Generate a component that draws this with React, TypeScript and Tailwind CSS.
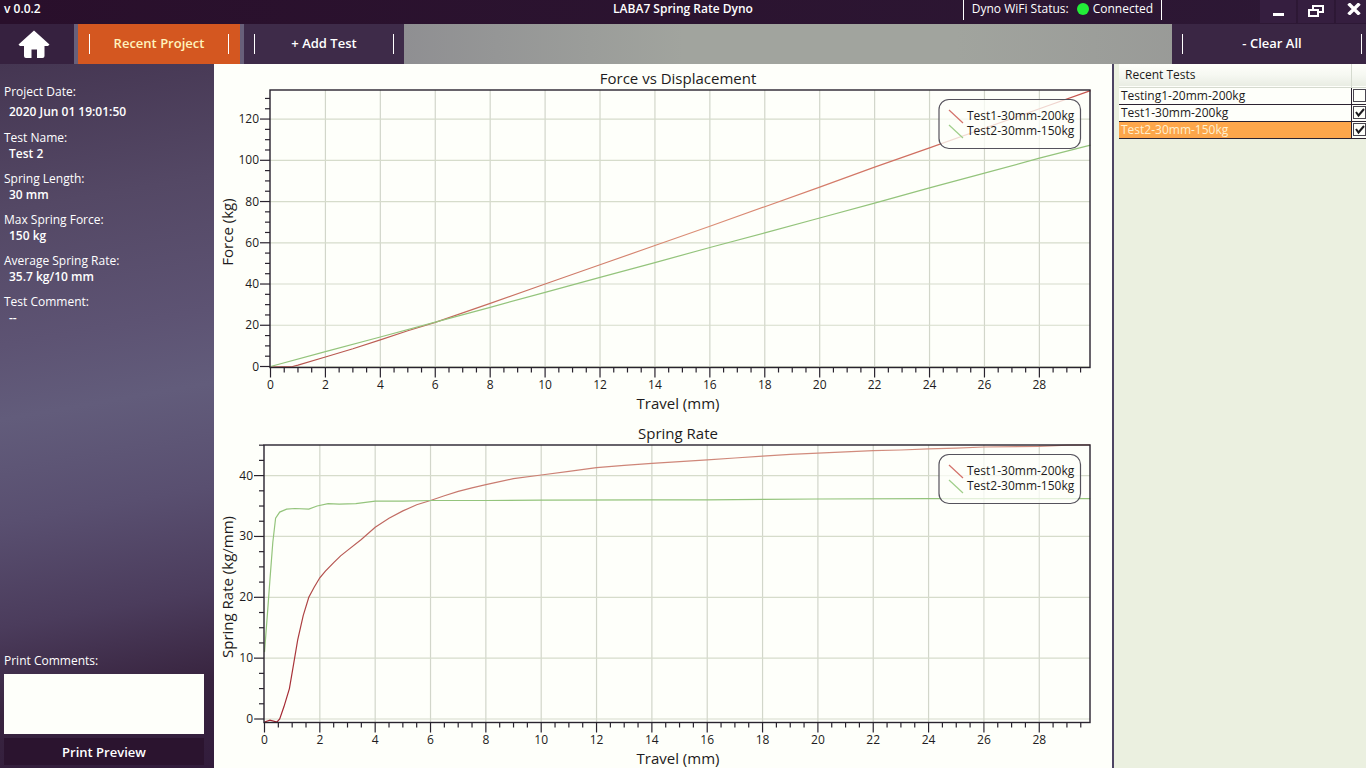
import { useState } from "react";

type Point = [number, number];

interface Axis {
  label: string;
  major: number[];
  minor: number[];
  toPixel: (v: number) => number;
}

interface ChartProps {
  title: string;
  viewHeight: number;
  plot: { left: number; top: number; right: number; bottom: number };
  x: Axis;
  y: Axis;
  red: Point[];
  green: Point[];
  tests: string[];
  strong?: boolean;
}

const range = (from: number, to: number, step: number) => {
  const out: number[] = [];
  for (let v = from; v <= to + 1e-9; v += step) out.push(v);
  return out;
};

const VIEW_WIDTH = 898;

function Chart({ title, viewHeight, plot, x, y, red, green, tests, strong }: ChartProps) {
  const { left, top, right, bottom } = plot;
  const middle = 464;
  const path = (pts: Point[]) =>
    pts.map(([a, b]) => `${x.toPixel(a).toFixed(1)},${y.toPixel(b).toFixed(1)}`).join(" ");
  const id = title.replace(/\s/g, "-");
  return (
    <svg
      viewBox={`0 0 ${VIEW_WIDTH} ${viewHeight}`}
      role="img"
      aria-label={title}
      className="block w-full font-['Open_Sans','Noto_Sans',sans-serif] text-[#1d1b20]"
    >
      <defs>
        <linearGradient id={`${id}-red`} gradientUnits="userSpaceOnUse" x1={left} y1={bottom} x2={left} y2={top}>
          <stop offset="0" stopColor={strong ? "#a32430" : "#b5524c"} />
          <stop offset="0.5" stopColor={strong ? "#b04a48" : "#dc9078"} />
          <stop offset="1" stopColor={strong ? "#d38f80" : "#c4524c"} />
        </linearGradient>
      </defs>
      <text x={middle} y={20} textAnchor="middle" fontSize="15" fill="currentColor">
        {title}
      </text>

      {x.major.filter((v) => v > 0).map((v) => (
        <line key={v} x1={x.toPixel(v)} x2={x.toPixel(v)} y1={top} y2={bottom} stroke="#d2d6ca" strokeWidth="1.2" />
      ))}
      {y.major.map((v) => (
        <line key={v} x1={left} x2={right} y1={y.toPixel(v)} y2={y.toPixel(v)} stroke="#d6dccb" strokeWidth="1.2" />
      ))}

      <polyline points={path(red)} fill="none" stroke={`url(#${id}-red)`} strokeWidth="1.2" />
      <polyline points={path(green)} fill="none" stroke="#94c47c" strokeWidth="1.2" />

      <rect x={left} y={top} width={right - left} height={bottom - top} fill="none" stroke="#29232e" strokeWidth="1.4" />

      {x.minor.map((v) => (
        <line key={v} x1={x.toPixel(v)} x2={x.toPixel(v)} y1={bottom} y2={bottom + 5} stroke="#29232e" strokeWidth="1.2" />
      ))}
      {x.major.map((v) => (
        <g key={v}>
          <line x1={x.toPixel(v)} x2={x.toPixel(v)} y1={bottom} y2={bottom + 10} stroke="#29232e" strokeWidth="1.2" />
          <text x={x.toPixel(v)} y={bottom + 21} textAnchor="middle" fontSize="12" fill="currentColor">
            {v}
          </text>
        </g>
      ))}
      {y.minor.map((v) => (
        <line key={v} x1={left - 5} x2={left} y1={y.toPixel(v)} y2={y.toPixel(v)} stroke="#29232e" strokeWidth="1.2" />
      ))}
      {y.major.map((v) => (
        <g key={v}>
          <line x1={left - 10} x2={left} y1={y.toPixel(v)} y2={y.toPixel(v)} stroke="#29232e" strokeWidth="1.2" />
          <text x={left - 11} y={y.toPixel(v) + 4} textAnchor="end" fontSize="12" fill="currentColor">
            {v}
          </text>
        </g>
      ))}

      <text x={middle} y={bottom + 41} textAnchor="middle" fontSize="15" fill="currentColor">
        {x.label}
      </text>
      <text transform="translate(19 168) rotate(-90)" textAnchor="middle" fontSize="15" fill="currentColor">
        {y.label}
      </text>

      <rect x="725" y={top + 9.5} width="141.5" height="49" rx="10" fill="#fefffa" fillOpacity="0.75" stroke="#55525c" strokeWidth="1.2" />
      <line x1="735" y1={top + 20} x2="749" y2={top + 33} stroke="#d3716a" strokeWidth="1.2" />
      <line x1="735" y1={top + 35} x2="749" y2={top + 48} stroke="#9fce8a" strokeWidth="1.2" />
      {tests.map((t, i) => (
        <text key={t} x="753" y={top + 30 + i * 15} fontSize="12" fill="currentColor">
          {t}
        </text>
      ))}
    </svg>
  );
}

const xTicks = range(0, 28, 2);
const xMinor = range(0.5, 29.5, 0.5).filter((v) => v % 2 !== 0);

const forceRed: Point[] = [
  [0, -0.3], [0.8, 0], [1, 0.7], [2, 4.6], [3, 8.6], [4, 12.9], [5, 17.3], [6, 21.4],
  [8, 30.6], [10, 40], [12, 49.3], [14, 58.7], [16, 68], [18, 77.5], [20, 87], [22, 96.7], [24, 106], [26, 115.5], [28, 125], [29.86, 133.8],
];
const forceGreen: Point[] = [
  [0, 0], [2, 7.2], [4, 14.3], [6, 21.5], [8, 28.7], [10, 36], [12, 43.2], [14, 50.4], [16, 57.7],
  [18, 64.8], [20, 72], [22, 79.2], [24, 86.6], [26, 93.8], [28, 101], [29.86, 107.3],
];
const rateRed: Point[] = [
  [0, -0.5], [0.2, -0.2], [0.45, -0.5], [0.55, 0], [0.7, 2], [0.9, 5], [1.05, 9], [1.2, 13], [1.4, 17], [1.6, 20],
  [1.8, 21.7], [2, 23.2], [2.2, 24.3], [2.5, 25.7], [2.75, 26.8], [3, 27.7], [3.5, 29.5], [4, 31.5], [4.5, 33],
  [5, 34.2], [5.5, 35.2], [6, 35.9], [6.5, 36.7], [7, 37.4], [7.5, 38], [8, 38.5], [8.5, 39], [9, 39.5], [10, 40.1],
  [11, 40.7], [12, 41.3], [13, 41.7], [14, 42], [15, 42.3], [16, 42.6], [17, 42.9], [18, 43.2], [19, 43.5], [20, 43.7],
  [21, 43.9], [22, 44.1], [23, 44.2], [24, 44.4], [25, 44.5], [26, 44.7], [28, 44.8], [29, 45], [29.84, 45.05],
];
const rateGreen: Point[] = [
  [0, 11], [0.1, 17], [0.2, 23], [0.3, 29], [0.4, 33], [0.55, 34], [0.8, 34.5], [1.1, 34.6], [1.6, 34.5], [1.9, 35],
  [2.3, 35.4], [2.7, 35.3], [3.3, 35.4], [4, 35.8], [5, 35.8], [6, 35.9], [8, 35.9], [10, 35.95], [14, 36],
  [16, 36], [20, 36.15], [24, 36.2], [29.84, 36.2],
];

const details = [
  { label: "Test Name:", value: "Test 2" },
  { label: "Spring Length:", value: "30 mm" },
  { label: "Max Spring Force:", value: "150 kg" },
  { label: "Average Spring Rate:", value: "35.7 kg/10 mm" },
  { label: "Test Comment:", value: "--" },
];

function Rule() {
  return <span className="h-5 w-px bg-white" />;
}

function TitleBar() {
  return (
    <header className="grid h-6 grid-cols-[1fr_auto_1fr] bg-linear-to-r from-[#290f2b] to-[#2d1835] text-xs">
      <span className="pl-1 leading-[18px] font-semibold">v 0.0.2</span>
      <h1 className="leading-[18px] font-semibold">LABA7 Spring Rate Dyno</h1>
      <div className="flex justify-end">
        <div className="mr-[98px] flex h-5 items-start gap-2 border-x border-white px-2 leading-[18px]">
          <span>Dyno WiFi Status:</span>
          <span className="flex items-center gap-1">
            <span className="size-3 rounded-full bg-[#22ee38]" />
            Connected
          </span>
        </div>
        <div className="flex gap-[2px]">
          <button type="button" aria-label="Minimize" className="flex h-[23px] w-9 items-end justify-center bg-[#351e3f] pb-[7px]">
            <span className="h-[3px] w-[11px] bg-white" />
          </button>
          <button type="button" aria-label="Restore" className="flex h-[23px] w-9 items-center justify-center bg-[#351e3f]">
            <svg viewBox="0 0 16 13" className="h-[13px] w-4" fill="none" stroke="white" strokeWidth="2">
              <path d="M5 4V1h10v6h-4" />
              <path d="M1 5h9v6H1z" />
            </svg>
          </button>
          <button type="button" aria-label="Close" className="flex h-[23px] w-[30px] items-start justify-end bg-[#351e3f] pt-[3px] pr-[5px]">
            <svg viewBox="0 0 14 12" className="h-3 w-[14px]" stroke="white" strokeWidth="3.4">
              <path d="M1.5 0.5l11 11M12.5 0.5l-11 11" />
            </svg>
          </button>
        </div>
      </div>
    </header>
  );
}

function NavBar() {
  return (
    <nav className="flex h-10 bg-[linear-gradient(90deg,#68607a_0,#68607a_244px,#8f8f92_404px,#a1a49e_50%,#a1a49e_70%,#929292_100%)] text-[13px] font-semibold">
      <button type="button" aria-label="Home" className="flex w-[74px] items-center bg-[#36213f] pl-[18px]">
        <svg viewBox="0 0 32 28" className="h-7 w-8" fill="white">
          <path d="M16 0.500 31.500 14.500 30 16H26.500v10q0 2-2 2H19v-8.500h-5.500V28H8q-2 0-2-2V16H2L0.500 14.500z" />
        </svg>
      </button>
      <button type="button" className="mx-1 flex w-[162px] items-center justify-between bg-[#d45720] px-[11px] text-[#fff3bd]">
        <Rule />
        Recent Project
        <Rule />
      </button>
      <button type="button" className="flex w-40 items-center justify-between bg-[#3e2b49] px-[10px]">
        <Rule />
        + Add Test
        <Rule />
      </button>
      <button type="button" className="ml-auto flex w-[194px] items-center justify-between bg-[#3a2644] pr-1 pl-[10px]">
        <Rule />
        - Clear All
        <Rule />
      </button>
    </nav>
  );
}

function Sidebar() {
  return (
    <aside className="flex w-[214px] shrink-0 flex-col bg-[linear-gradient(170deg,#453652_0%,#544865_20%,#5d5373_38%,#625c7b_48%,#594f70_62%,#4b3c5c_76%,#38243f_88%,#321c3c_100%)] px-1 pt-[18px] pb-[3px] text-xs leading-4">
      <dl>
        <dt className="mt-[2px]">Project Date:</dt>
        <dd className="mt-1 mb-[10px] pl-[5px] font-semibold">2020 Jun 01 19:01:50</dd>
        {details.map((d) => (
          <div key={d.label} className="mb-[9px]">
            <dt>{d.label}</dt>
            <dd className="pl-[5px] font-semibold [font-variant-ligatures:none]">{d.value}</dd>
          </div>
        ))}
      </dl>
      <div className="mt-auto flex flex-col">
        <label htmlFor="print-comments">Print Comments:</label>
        <textarea id="print-comments" className="mt-[5px] mr-[6px] h-[60px] resize-none bg-[#fefffa] p-1 text-black outline-none" />
        <button type="button" className="mt-1 mr-[6px] h-[27px] bg-[#2b142f] text-[13px] font-semibold">
          Print Preview
        </button>
      </div>
    </aside>
  );
}

function RecentTests() {
  const [rows, setRows] = useState([
    { name: "Testing1-20mm-200kg", shown: false, selected: false },
    { name: "Test1-30mm-200kg", shown: true, selected: false },
    { name: "Test2-30mm-150kg", shown: true, selected: true },
  ]);
  const toggle = (i: number) =>
    setRows(rows.map((r, j) => (i === j ? { ...r, shown: !r.shown } : r)));
  return (
    <aside className="w-[254px] shrink-0 overflow-hidden border-l-2 border-[#4d4463] bg-[#ebf0e0] pl-[5px] text-xs text-[#1d1b20]">
      <table className="w-full table-fixed border-collapse">
        <colgroup>
          <col />
          <col className="w-[15px]" />
        </colgroup>
        <thead>
          <tr className="h-[23px] border-b border-[#d5dacf] bg-linear-to-b from-[#fefffa] via-[#f6f8f2] to-[#e9ede3]">
            <th scope="col" className="border-r border-[#d5dacf] p-0 pl-[6px] text-left font-normal">Recent Tests</th>
            <th aria-label="Shown" className="p-0" />
          </tr>
        </thead>
        <tbody>
          {rows.map((r, i) => (
            <tr
              key={r.name}
              className={
                r.selected
                  ? "h-[17px] border-b border-[#2b2230] bg-[#fda64b] text-[#fff0cf]"
                  : "h-[17px] border-b border-[#2b2230] bg-[#fefffa]"
              }
            >
              <td className="border-r border-[#2b2230] p-0 pl-[2px] leading-4">
                <label htmlFor={`test-${i}`}>{r.name}</label>
              </td>
              <td className="overflow-hidden bg-[#fefffa] p-0 pl-px">
                <span className="grid size-[13px]">
                  <input
                    id={`test-${i}`}
                    type="checkbox"
                    checked={r.shown}
                    onChange={() => toggle(i)}
                    className="peer col-start-1 row-start-1 size-[13px] appearance-none border border-[#4a4650] bg-[#fefffa]"
                  />
                  <svg
                    viewBox="0 0 13 13"
                    className="pointer-events-none invisible col-start-1 row-start-1 size-[13px] peer-checked:visible"
                    fill="none"
                    stroke="#1d1b20"
                    strokeWidth="2"
                  >
                    <path d="M3 6l2.500 3.500L11 3" />
                  </svg>
                </span>
              </td>
            </tr>
          ))}
        </tbody>
      </table>
    </aside>
  );
}

export default function App() {
  const tests = ["Test1-30mm-200kg", "Test2-30mm-150kg"];
  return (
    <div className="flex min-h-screen flex-col bg-[#36213f] font-['Open_Sans','Noto_Sans',sans-serif] text-white">
      <TitleBar />
      <NavBar />
      <div className="flex flex-1">
        <Sidebar />
        <main className="min-w-0 flex-1 bg-[#fefffa]">
          <Chart
            title="Force vs Displacement"
            viewHeight={355}
            plot={{ left: 56, top: 26, right: 876, bottom: 303.5 }}
            x={{ label: "Travel (mm)", major: xTicks, minor: xMinor, toPixel: (v) => 56.5 + v * 27.46 }}
            y={{
              label: "Force (kg)",
              major: range(0, 120, 20),
              minor: range(5, 130, 5).filter((v) => v % 20 !== 0),
              toPixel: (v) => 302.5 - v * 2.062,
            }}
            red={forceRed}
            green={forceGreen}
            tests={tests}
          />
          <Chart
            title="Spring Rate"
            viewHeight={349}
            plot={{ left: 50, top: 26, right: 876, bottom: 303.5 }}
            x={{ label: "Travel (mm)", major: xTicks, minor: xMinor, toPixel: (v) => 50.5 + v * 27.67 }}
            y={{
              label: "Spring Rate (kg/mm)",
              major: range(0, 40, 10),
              minor: range(2.5, 45, 2.5).filter((v) => v % 10 !== 0),
              toPixel: (v) => 300 - v * 6.085,
            }}
            red={rateRed}
            green={rateGreen}
            tests={tests}
            strong
          />
        </main>
        <RecentTests />
      </div>
    </div>
  );
}
